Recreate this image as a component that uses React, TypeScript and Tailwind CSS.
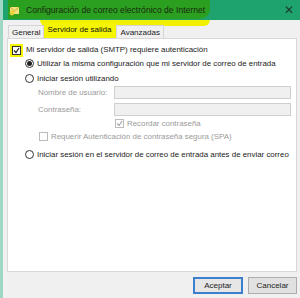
import React from "react";

const Radio = ({ checked }: { checked?: boolean }) => (
  <span className="w-[9px] h-[9px] rounded-full border border-[#333] bg-white flex items-center justify-center shrink-0">
    {checked && <span className="w-[5px] h-[5px] rounded-full bg-[#222]" />}
  </span>
);

const Check = ({ checked, disabled }: { checked?: boolean; disabled?: boolean }) => (
  <span
    className={`w-[9px] h-[9px] border ${disabled ? "border-[#bbb]" : "border-[#333]"} bg-white flex items-center justify-center shrink-0`}
  >
    {checked && (
      <svg width="7" height="7" viewBox="0 0 7 7">
        <path d="M1 3.5 L3 5.5 L6 1" fill="none" stroke={disabled ? "#aaa" : "#222"} strokeWidth="1.2" />
      </svg>
    )}
  </span>
);

export default function App() {
  return (
    <div
      className="relative w-[300px] h-[298px] bg-[#f0f0f0] overflow-hidden text-[#222] whitespace-nowrap"
      style={{ fontFamily: "'Liberation Sans', Arial, sans-serif" }}
    >
      {/* highlighter mark under title */}
      <div className="absolute left-[40px] top-[17px] w-[170px] h-[9px] bg-[#f2f000] rounded-b-[6px]" />

      <div className="relative flex flex-col h-full border-l-[3px] border-[#9fd6c4]">
        {/* title bar */}
        <div className="h-[20px] bg-[#1fa36e] flex items-center pl-[6px] pr-[6px] relative">
          <div className="absolute left-[5px] top-0 w-[202px] h-[19px] bg-[#2b9f1f] rounded-br-[10px]" />
          <svg width="11" height="11" viewBox="0 0 11 11" className="relative">
            <rect x="1" y="2" width="9" height="7" fill="#f3e27a" />
            <path d="M1 2 L5.5 6 L10 2" fill="none" stroke="#c9a730" strokeWidth="1" />
            <circle cx="3" cy="8" r="2.4" fill="#e8d23a" />
          </svg>
          <span className="relative ml-[6px] text-[8.6px] text-[#1a2a12] leading-none">
            Configuración de correo electrónico de Internet
          </span>
          <span className="ml-auto relative text-[12px] text-[#1c3b2a] leading-none">✕</span>
        </div>

        {/* tabs */}
        <div className="h-[18px] flex items-end pl-[5px] relative">
          <span className="h-[13px] px-[3px] text-[8px] leading-[13px] border border-b-0 border-[#d5d5d5] bg-[#f0f0f0]">General</span>
          <span className="h-[15px] w-[72px] px-[3px] text-[8px] leading-[14px] bg-[#f5f500] rounded-t-[3px] text-[#111]">Servidor de salida</span>
          <span className="h-[13px] px-[3px] text-[8px] leading-[13px] border border-b-0 border-[#d5d5d5] bg-[#f0f0f0]">Avanzadas</span>
        </div>

        {/* panel */}
        <div className="mx-[4px] mr-[3px] h-[234px] bg-white border border-[#d8d8d8] flex flex-col text-[7.9px] leading-none pl-[4px] pt-[5px]">
          <div className="flex items-center gap-[3px] h-[12px]">
            <span className="bg-[#f5f500] p-[2px] -ml-[2px]">
              <Check checked />
            </span>
            <span>Mi servidor de salida (SMTP) requiere autenticación</span>
          </div>
          <div className="flex items-center gap-[3px] mt-[2px] ml-[13px] h-[11px]">
            <Radio checked />
            <span>Utilizar la misma configuración que mi servidor de correo de entrada</span>
          </div>
          <div className="flex items-center gap-[3px] mt-[4px] ml-[13px] h-[11px]">
            <Radio />
            <span>Iniciar sesión utilizando</span>
          </div>
          <div className="flex items-center mt-[2px] ml-[26px] h-[13px]">
            <span className="w-[76px] text-[#9a9a9a]">Nombre de usuario:</span>
            <span className="flex-1 mr-[5px] h-[13px] bg-[#f0f0f0] border border-[#cfcfcf]" />
          </div>
          <div className="flex items-center mt-[4px] ml-[26px] h-[13px]">
            <span className="w-[76px] text-[#9a9a9a]">Contraseña:</span>
            <span className="flex-1 mr-[5px] h-[13px] bg-[#f0f0f0] border border-[#cfcfcf]" />
          </div>
          <div className="flex items-center gap-[3px] mt-[2px] ml-[103px] h-[11px]">
            <Check checked disabled />
            <span className="text-[#9a9a9a]">Recordar contraseña</span>
          </div>
          <div className="flex items-center gap-[3px] mt-[2px] ml-[27px] h-[11px]">
            <Check disabled />
            <span className="text-[#9a9a9a]">Requerir Autenticación de contraseña segura (SPA)</span>
          </div>
          <div className="flex items-center gap-[3px] mt-[7px] ml-[13px] h-[11px]">
            <Radio />
            <span>Iniciar sesión en el servidor de correo de entrada antes de enviar correo</span>
          </div>
        </div>

        {/* buttons */}
        <div className="flex justify-end gap-[5px] pr-[3px] mt-[5px]">
          <span className="w-[50px] h-[17px] border-[2px] border-[#3c7fcf] bg-[#e6e6e6] text-[8px] flex items-center justify-center">Aceptar</span>
          <span className="w-[49px] h-[17px] border border-[#adadad] bg-[#e1e1e1] text-[8px] flex items-center justify-center">Cancelar</span>
        </div>
      </div>
    </div>
  );
}
